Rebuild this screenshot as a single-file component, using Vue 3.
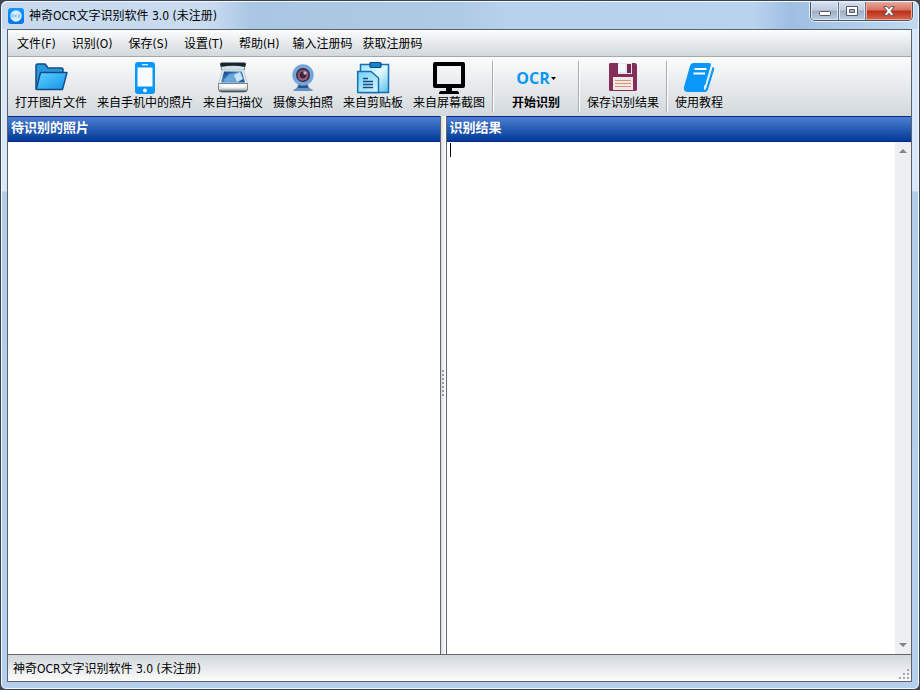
<script setup>
import { ref } from 'vue'

const title = '神奇OCR文字识别软件 3.0 (未注册)'
const result = ref('')
const menus = [
  { label: '文件(F)', kind: 'accel' },
  { label: '识别(O)', kind: 'accel' },
  { label: '保存(S)', kind: 'accel' },
  { label: '设置(T)', kind: 'accel' },
  { label: '帮助(H)', kind: 'help' },
  { label: '输入注册码', kind: 'plain' },
  { label: '获取注册码', kind: 'plain' },
]
</script>

<template>
  <div class="window">
    <header class="titlebar">
      <svg class="logo" viewBox="0 0 16 16" aria-hidden="true">
        <defs>
          <linearGradient id="logoFill" x1="0" y1="0" x2="0" y2="1">
            <stop offset="0" stop-color="#1597ff" /><stop offset="1" stop-color="#0874e8" />
          </linearGradient>
        </defs>
        <rect width="16" height="16" rx="3" fill="url(#logoFill)" />
        <circle cx="8" cy="8" r="5.7" fill="#d8edfd" />
        <circle cx="5" cy="8" r="1.4" fill="none" stroke="#7cc3f8" />
        <path d="M9 6.800Q7.200 6.500 7.200 8T9 9.200M10.500 9.700V6.800H12L10.800 8 12 9.500" fill="none" stroke="#7cc3f8" />
      </svg>
      <h1 class="title">{{ title }}</h1>
      <div class="controls">
        <button class="ctl min" aria-label="最小化">
          <svg width="14" height="8" viewBox="0 0 14 8"><rect x="1.5" y="2.5" width="11" height="4" rx="1" fill="#fff" stroke="#535866" /></svg>
        </button>
        <button class="ctl max" aria-label="最大化">
          <svg width="12" height="10" viewBox="0 0 12 10"><path d="M.5.5h11v9H.5zM3.5 3.5v3h5v-3z" fill="#fff" fill-rule="evenodd" stroke="#535866" /></svg>
        </button>
        <button class="ctl close" aria-label="关闭">
          <svg width="12" height="10" viewBox="0 0 12 10"><path d="M.7.6h3.400L6 2.800 7.900.6h3.400L7.800 5l3.500 4.400H7.900L6 7.200 4.100 9.400H.7L4.200 5z" fill="#fff" stroke="#574650" stroke-width=".9" /></svg>
        </button>
      </div>
    </header>

    <main class="client">
      <nav class="menubar">
        <button v-for="m in menus" :key="m.label" class="menu" :class="m.kind">{{ m.label }}</button>
      </nav>

      <div class="toolbar" role="toolbar">
        <button class="tool">
          <svg class="icon" viewBox="0 0 34 34" aria-hidden="true">
            <defs>
              <linearGradient id="folderFill" x1="0" y1="0" x2="1" y2="1">
                <stop offset="0" stop-color="#5fd4ff" /><stop offset="1" stop-color="#1290ea" />
              </linearGradient>
            </defs>
            <path d="M2 28V4.500Q2 3 3.500 3H11l3 4h13.500Q29 7 29 8.500V13" fill="#2b98dc" stroke="#144a86" stroke-width="1.500" stroke-linejoin="round" />
            <path d="M6.500 11.500H33L28.500 28.500H2.200z" fill="url(#folderFill)" stroke="#144a86" stroke-width="1.400" stroke-linejoin="round" />
          </svg>
          <span>打开图片文件</span>
        </button>
        <button class="tool">
          <svg class="icon" viewBox="0 0 34 34" aria-hidden="true">
            <rect x="7" y="1" width="20" height="32" rx="3" fill="#0a97f7" />
            <rect x="9.500" y="6.500" width="15" height="19" fill="#f8fbfd" />
            <rect x="14" y="3" width="6" height="1.300" fill="#d9effd" />
            <circle cx="17" cy="29.400" r="1.900" fill="#fff" />
          </svg>
          <span>来自手机中的照片</span>
        </button>
        <button class="tool">
          <svg class="icon" viewBox="0 0 34 34" aria-hidden="true">
            <defs>
              <linearGradient id="glass" x1="0" y1="0" x2="1" y2="1">
                <stop offset="0" stop-color="#123d78" /><stop offset=".5" stop-color="#3f87c9" /><stop offset="1" stop-color="#1d4f92" />
              </linearGradient>
              <linearGradient id="scanBody" x1="0" y1="0" x2="0" y2="1">
                <stop offset="0" stop-color="#fff" /><stop offset=".65" stop-color="#d2d8dc" /><stop offset="1" stop-color="#303940" />
              </linearGradient>
            </defs>
            <path d="M4 3Q4 1.500 6 1.500H28Q30 1.500 30 3L28.500 9H5.500z" fill="#17252f" />
            <path d="M5 6Q17 3.500 29 6L27.500 10H6.500z" fill="#cfe0e8" />
            <path d="M6.500 9H27.500L31.500 23H2.500z" fill="#f0f4f6" stroke="#aab5bc" stroke-width=".7" />
            <path d="M8 10.500H26L29 21.500H5z" fill="url(#glass)" />
            <path d="M8 19l5-6 11-2 3 7-6 3.500H9z" fill="#8fcaf2" opacity=".55" />
            <path d="M18 14l6-3 3 7-6 3z" fill="#e4f5ff" opacity=".8" />
            <path d="M2.500 22.500H31.500V28Q31.500 31 28 31H6Q2.500 31 2.500 28z" fill="url(#scanBody)" stroke="#4c565c" stroke-width=".7" />
            <path d="M6 25.500H28" stroke="#fff" stroke-width="2" />
          </svg>
          <span>来自扫描仪</span>
        </button>
        <button class="tool">
          <svg class="icon" viewBox="0 0 34 34" aria-hidden="true">
            <path d="M12 23h10q0 4 5 6l-1 1H8l-1-1q5-2 5-6z" fill="#6590c4" />
            <path d="M13 23h8l1 4H12z" fill="#2f5285" />
            <circle cx="17" cy="14" r="10.700" fill="#74a4d9" />
            <circle cx="17" cy="14" r="7" fill="#352a40" /><circle cx="17" cy="14" r="5.500" fill="#895472" />
            <circle cx="17" cy="14" r="3.200" fill="#38253a" /><circle cx="19" cy="12" r="1.700" fill="#d2b1cb" />
            <path d="M12 17q4 4 9 0" fill="none" stroke="#aa7594" />
          </svg>
          <span>摄像头拍照</span>
        </button>
        <button class="tool">
          <svg class="icon" viewBox="0 0 34 34" aria-hidden="true">
            <defs>
              <linearGradient id="paper" x1="0" y1="0" x2="1" y2="1">
                <stop offset="0" stop-color="#9fe4fb" /><stop offset=".5" stop-color="#e2faff" /><stop offset="1" stop-color="#55bdeb" />
              </linearGradient>
              <linearGradient id="note" x1="0" y1="0" x2="1" y2="1">
                <stop offset="0" stop-color="#6fd0f8" /><stop offset="1" stop-color="#d8f7ff" />
              </linearGradient>
            </defs>
            <rect x="4.500" y="3.500" width="28" height="28" fill="url(#paper)" stroke="#1671b0" stroke-width="1.500" />
            <rect x="14" y="1.500" width="11" height="5" rx="1" fill="#1587cc" stroke="#0e4784" stroke-width="1.200" />
            <path d="M1.700 10.500H15L22.500 17V31.500H1.700z" fill="url(#note)" stroke="#1671b0" stroke-width="1.500" />
            <path d="M7 17.500h5M7 20.500h10M7 23.500h10M7 26.500h10" stroke="#184b83" stroke-width="1.300" />
          </svg>
          <span>来自剪贴板</span>
        </button>
        <button class="tool">
          <svg class="icon" viewBox="0 0 34 34" aria-hidden="true">
            <path fill="#000" fill-rule="evenodd" d="M3 1H31q2 0 2 2V25q0 2-2 2H20v3h5q2 0 2 3H7q0-3 2-3h5V27H3q-2 0-2-2V3q0-2 2-2zM5 5V23H29V5z" />
          </svg>
          <span>来自屏幕截图</span>
        </button>
        <i class="sep"></i>
        <button class="tool start">
          <span class="icon ocr">OCR<svg width="5" height="3" viewBox="0 0 5 3" aria-hidden="true"><path d="M0 0H5L2.500 3z" /></svg></span>
          <span>开始识别</span>
        </button>
        <i class="sep"></i>
        <button class="tool">
          <svg class="icon" viewBox="0 0 34 34" aria-hidden="true">
            <path d="M4 2H29.500L31 3.500V28.500Q31 30 29.500 30H4.500Q3 30 3 28.500V3.500Q3 2 4 2z" fill="#842e59" />
            <path d="M12 2H26V13H12z" fill="#e4e8eb" /><path d="M21 3H25V12H21z" fill="#7b2750" /><path d="M12 3h7v8h-7z" fill="#f7f8fa" />
            <path d="M7 16H27V29H7z" fill="#eee9e7" /><path d="M9 19.500H25M9 22.500H25M9 25.500H25" stroke="#d99372" stroke-width="1.200" />
          </svg>
          <span>保存识别结果</span>
        </button>
        <i class="sep"></i>
        <button class="tool">
          <svg class="icon" viewBox="0 0 34 34" aria-hidden="true">
            <path d="M11 2H27q2.500 0 1.800 2.500L23.500 23q-.7 2-2.500 2H6.500q-2.500 0-2.500 2t2.500 2H22q1.500 0 2-1.500L30.500 6q2.300.5 1.500 3L26 28.500Q25.200 31 22.500 31H6Q1 31 2 26L8 5Q9 2 11 2z" fill="#0a97f7" />
            <path d="M3 26l3-3h16v6H5z" fill="#0a97f7" />
            <path d="M29.500 7L23.500 26.500" stroke="#dff1fd" stroke-width="1.200" />
            <path d="M12.500 8H24.500M11.500 12.500H23" stroke="#fff" stroke-width="1.800" />
          </svg>
          <span>使用教程</span>
        </button>
      </div>

      <div class="workspace">
        <section class="pane photos">
          <h2 class="pane-title">待识别的照片</h2>
          <div class="pane-body"></div>
        </section>
        <div class="splitter" role="separator" aria-orientation="vertical">
          <i v-for="n in 7" :key="n" class="grip"></i>
        </div>
        <section class="pane results">
          <h2 class="pane-title"><label for="result">识别结果</label></h2>
          <div class="pane-body">
            <textarea id="result" v-model="result" class="editor"></textarea>
            <i class="caret"></i>
            <div class="scrollbar">
              <button class="arrow" aria-label="向上滚动"><svg width="8" height="4" viewBox="0 0 8 4"><path d="M0 4 4 0 8 4z" fill="#858585" /></svg></button>
              <button class="arrow" aria-label="向下滚动"><svg width="8" height="4" viewBox="0 0 8 4"><path d="M0 0H8L4 4z" fill="#858585" /></svg></button>
            </div>
          </div>
        </section>
      </div>

      <footer class="status">
        <span>{{ title }}</span>
        <svg class="resize" width="11" height="11" viewBox="0 0 11 11" aria-hidden="true">
          <path d="M8 0h2v2H8zM4 4h2v2H4zM8 4h2v2H8zM0 8h2v2H0zM4 8h2v2H4zM8 8h2v2H8z" fill="#a4a7a9" />
        </svg>
      </footer>
    </main>
  </div>
</template>

<style>
body {
  background: #45464d;
}
</style>

<style scoped>
* {
  box-sizing: border-box;
}
button {
  margin: 0;
  padding: 0;
  border: 0;
  background: none;
  color: inherit;
  font: inherit;
}
svg {
  display: block;
}
.window {
  display: flex;
  flex-direction: column;
  height: 100vh;
  padding: 0 7px 7px;
  border: 1px solid #3d4250;
  border-radius: 7px 7px 6px 6px;
  background: linear-gradient(#d8e8f8 0, #d8e8f8 190px, #b2cde9 191px, #b5d0ee 100%);
  box-shadow: inset 0 0 0 1px #f1f8ff;
  color: #000;
  font: 12px/16px "DejaVu Sans Condensed", "Noto Sans CJK SC", sans-serif;
  white-space: nowrap;
}
.titlebar {
  display: flex;
  flex: none;
  align-items: center;
  height: 28px;
  margin: 0 -6px;
  padding: 0 5px 0 6px;
  border-top: 1px solid #f1f8ff;
  border-radius: 6px 6px 0 0;
  background: linear-gradient(90deg, #c8daf0 0, #c8dbf1 210px, #a9c6e2 250px, #afcae5 460px, #b7d1ec 500px, #b9d3ef 82%, #9fbfe2 86%, #c1d9f2 100%);
}
.logo {
  width: 16px;
  height: 16px;
}
.title {
  margin: 0 0 0 5px;
  font-size: 12px;
  font-weight: 400;
}
.controls {
  display: flex;
  align-self: flex-start;
  height: 19px;
  margin-left: auto;
  border: 1px solid #4b5260;
  border-top: 0;
  border-radius: 0 0 5px 5px;
  overflow: hidden;
  box-shadow: 0 0 0 1px #e3effb;
}
.ctl {
  display: grid;
  place-items: center;
  width: 28px;
  border-right: 1px solid #68758a;
  background: linear-gradient(#d5dfed 0, #bfcbdd 45%, #9dacc4 50%, #bdcfe5 100%);
  box-shadow: inset 0 0 0 1px #dce7f4;
}
.ctl.min {
  padding-top: 4px;
}
.ctl.max {
  width: 27px;
}
.ctl.close {
  width: 46px;
  border-right: 0;
  background: linear-gradient(#e6a79c 0, #d5715f 45%, #bd2d17 50%, #d5694d 100%);
  box-shadow: inset 0 0 0 1px #eba99b;
}
.client {
  display: flex;
  flex: 1;
  flex-direction: column;
  min-height: 0;
  margin-left: -1px;
  border: 1px solid #5c626a;
  background: #e9ecef;
}
.menubar {
  display: flex;
  flex: none;
  gap: 10px;
  height: 27px;
  padding: 2px 9px 0;
  border-bottom: 1px solid #a5a7a9;
  background: linear-gradient(#fcfdfd, #d2d8dc);
}
.menu.accel {
  margin-right: 6px;
}
.menu.help {
  margin-right: 3px;
}
.toolbar {
  display: flex;
  flex: none;
  height: 59px;
  padding: 4px 2px;
  background: linear-gradient(#fbfcfc, #d2d8dc);
}
.tool {
  display: flex;
  flex: none;
  flex-direction: column;
  align-items: center;
  padding: 0 5px;
}
.icon {
  width: 34px;
  height: 34px;
}
.ocr {
  display: flex;
  align-items: center;
  justify-content: center;
  gap: 1px;
  width: auto;
  color: #0a97f7;
  font: 700 16px/32px "Open Sans", sans-serif;
}
.ocr path {
  fill: #000;
}
.start {
  width: 80px;
  font-weight: 700;
}
.sep {
  flex: none;
  width: 2px;
  margin: 0 2px;
  border-left: 1px solid #a9adb0;
  border-right: 1px solid #fff;
}
.workspace {
  display: flex;
  flex: 1;
  min-height: 0;
}
.pane {
  display: flex;
  flex-direction: column;
  min-width: 0;
}
.photos {
  flex: 432;
  border-right: 1px solid #64666a;
}
.results {
  flex: 465;
  border-left: 1px solid #64666a;
}
.pane-title {
  flex: none;
  height: 26px;
  margin: 0;
  padding: 0 3px;
  border: 1px solid #07278c;
  border-width: 1px 0;
  background: linear-gradient(#4c7fd0, #033a99);
  color: #fff;
  font-size: 13px;
  line-height: 22px;
}
.pane-body {
  position: relative;
  display: flex;
  flex: 1;
  min-height: 0;
  background: #fff;
}
.editor {
  flex: 1;
  min-width: 0;
  padding: 1px 3px;
  border: 0;
  outline: 0;
  background: #fff;
  font: inherit;
  resize: none;
  overflow: hidden;
}
.caret {
  position: absolute;
  top: 1px;
  left: 3px;
  width: 1px;
  height: 14px;
  background: #000;
}
.scrollbar {
  display: flex;
  flex-direction: column;
  justify-content: space-between;
  width: 16px;
  background: #eeeff0;
}
.arrow {
  display: grid;
  place-items: center;
  height: 18px;
}
.splitter {
  display: flex;
  flex: none;
  flex-direction: column;
  align-items: center;
  justify-content: center;
  gap: 2px;
  width: 5px;
  padding-bottom: 4px;
  background: linear-gradient(90deg, #d9dde2, #fff);
}
.grip {
  width: 2px;
  height: 2px;
  background: #999b9e;
}
.status {
  display: flex;
  flex: none;
  align-items: center;
  height: 27px;
  padding: 2px 1px 0 5px;
  border-top: 1px solid #64666a;
  background: linear-gradient(#d1d7db, #fbfcfc);
}
.resize {
  align-self: flex-end;
  margin-left: auto;
  margin-bottom: 1px;
}
</style>
